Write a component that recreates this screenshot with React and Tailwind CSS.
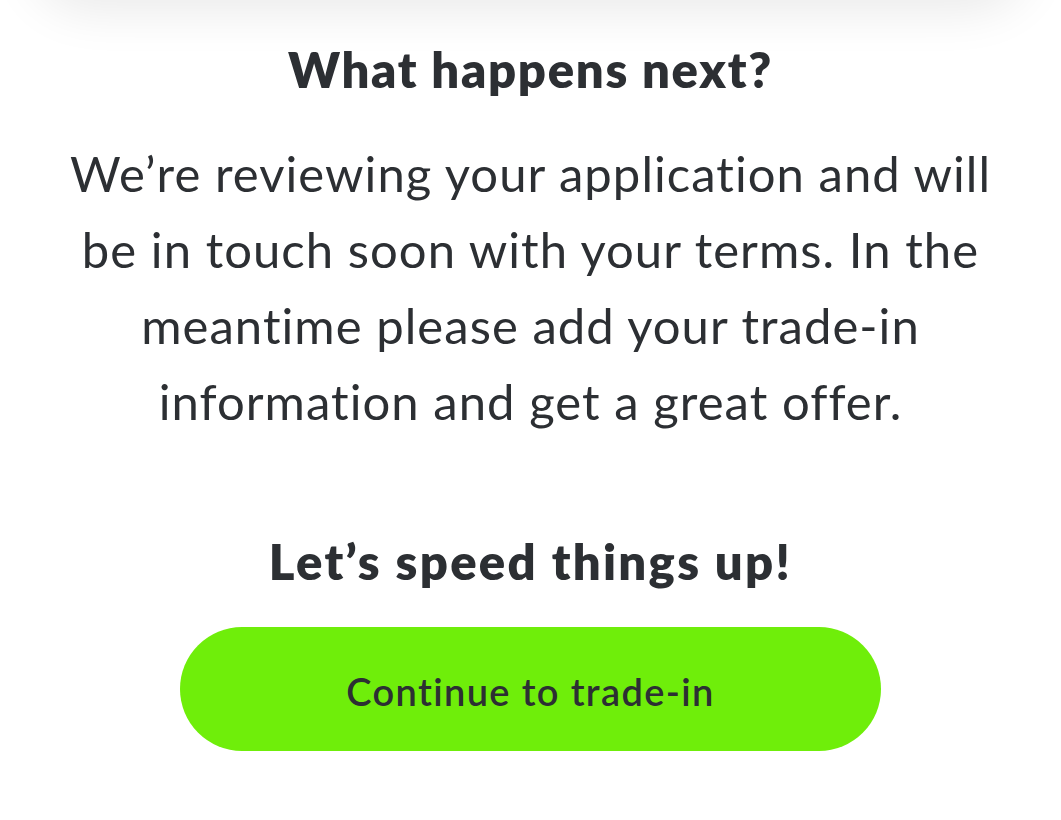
export default function App() {
  return (
    <div
      className="min-h-[820px] bg-white overflow-hidden text-[#2c2f33] [font-variant-ligatures:none]"
      style={{ fontFamily: "Lato, 'Open Sans', sans-serif" }}
    >
      {/* card above, only its shadow shows */}
      <div className="mx-[30px] h-[60px] -mt-[60px] rounded-b-[60px] bg-white shadow-[0_10px_50px_rgba(0,0,0,0.09)]" />

      <div className="flex flex-col items-center text-center px-6">
        <h2 className="mt-[41px] text-[49px] leading-[56px] font-extrabold tracking-[1.7px]">
          What happens next?
        </h2>
        <p className="mt-[38px] text-[49px] leading-[76px] font-normal tracking-[1.05px] whitespace-nowrap">
          We’re reviewing your application and will
          <br />
          be in touch soon with your terms. In the
          <br />
          meantime please add your trade-in
          <br />
          information and get a great offer.
        </p>
        <h3 className="mt-[94px] text-[49px] leading-[56px] font-extrabold tracking-[2.3px]">
          Let’s speed things up!
        </h3>
        <button className="mt-[38px] w-[701px] h-[124px] rounded-full bg-[#6fee0a] text-[38px] font-semibold tracking-[1.35px] text-[#2c2f33] pt-[4px]">
          Continue to trade-in
        </button>
      </div>
    </div>
  );
}
